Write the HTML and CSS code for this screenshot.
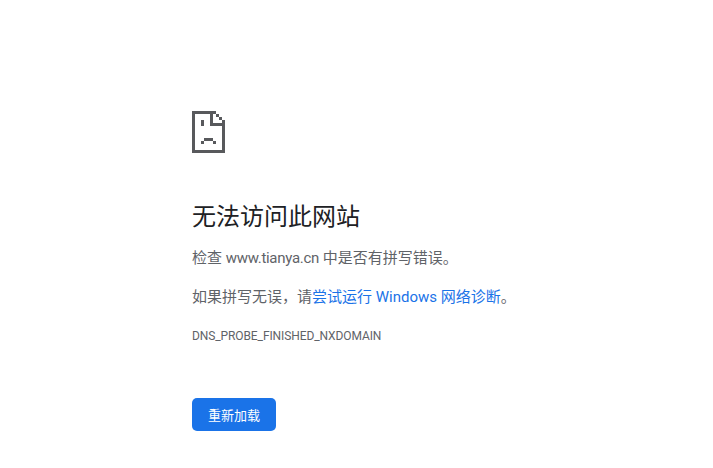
FILE: index.html
```html
<!DOCTYPE html>
<html lang="zh-CN">
<head>
    <meta charset="UTF-8">
    <title>www.tianya.cn</title>
    <link rel="stylesheet" href="styles.css">
</head>
<body>
    <div class="container">
        <svg class="icon" width="33" height="42" viewBox="0 0 33 42" shape-rendering="crispEdges" fill="#58595c">
            <path fill-rule="evenodd" d="M0 0H24V3H27V6H30V9H33V42H0ZM3 3V39H30V15H18V3ZM21 3V12H30V9H27V6H24V3Z"/>
            <rect x="9" y="9" width="3" height="6"/>
            <rect x="12" y="27" width="9" height="3"/>
            <rect x="9" y="30" width="3" height="3"/>
            <rect x="21" y="30" width="3" height="3"/>
        </svg>
        <h1>无法访问此网站</h1>
        <p>检查 <span class="host">www.tianya.cn</span> 中是否有拼写错误。</p>
        <p>如果拼写无误，请<a href="#">尝试运行 Windows 网络诊断</a>。</p>
        <div class="error-code">DNS_PROBE_FINISHED_NXDOMAIN</div>
        <button class="reload-btn">重新加载</button>
    </div>
</body>
</html>
```

FILE: styles.css
```css
* {
    margin: 0;
    padding: 0;
    box-sizing: border-box;
}

body {
    background: #fff;
    font-family: Roboto, "Noto Sans CJK SC", sans-serif;
    color: #5f6368;
    font-size: 15px;
}

.container {
    padding: 111px 0 0 192px;
}

.icon {
    display: block;
    margin-bottom: 46px;
}

h1 {
    color: #202124;
    font-size: 24px;
    font-weight: 400;
    line-height: 36px;
    margin-bottom: 11px;
}

p {
    line-height: 25px;
    margin-bottom: 14px;
}

.host {
    letter-spacing: -0.3px;
}

a {
    color: #1a73e8;
    text-decoration: none;
}

.error-code {
    font-size: 12px;
    line-height: 18px;
    letter-spacing: -0.1px;
    margin-top: 17px;
}

.reload-btn {
    display: block;
    margin-top: 53px;
    width: 84px;
    height: 33px;
    background: #1a73e8;
    color: #fff;
    border: none;
    border-radius: 5px;
    font-family: inherit;
    font-size: 13px;
    font-weight: 400;
}
```
